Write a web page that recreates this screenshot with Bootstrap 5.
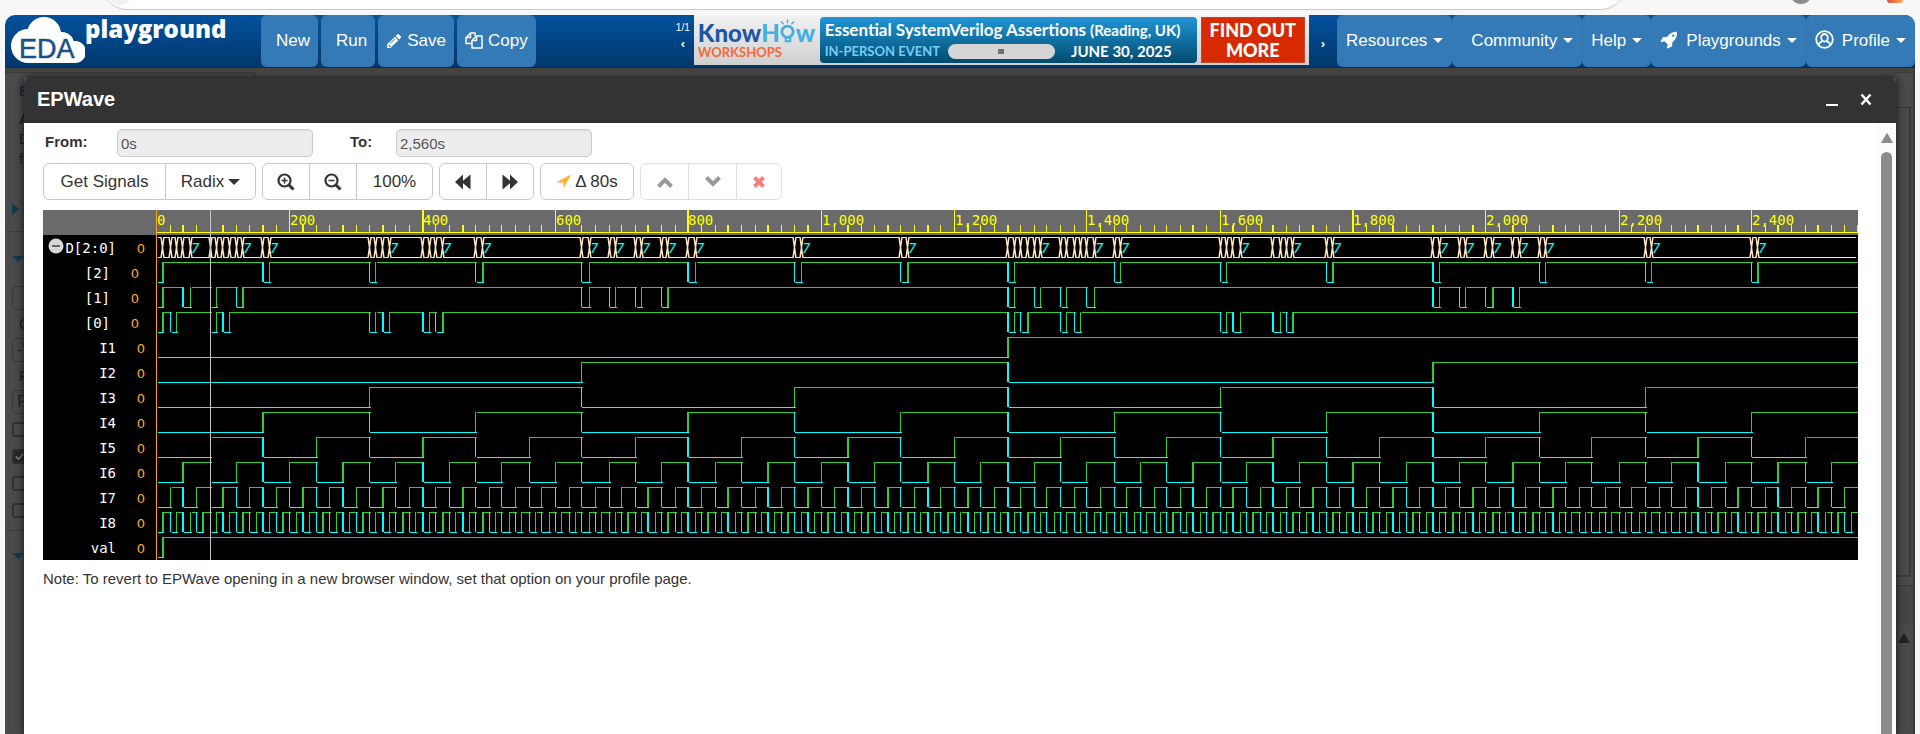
<!DOCTYPE html>
<html lang="en">
<head>
<meta charset="utf-8">
<meta name="viewport" content="width=device-width, initial-scale=1">
<title>EDA Playground - EPWave</title>
<link href="https://cdn.jsdelivr.net/npm/bootstrap@5.3.0/dist/css/bootstrap.min.css" rel="stylesheet">
<style>
  body { font-family: "Liberation Sans", Arial, sans-serif; font-size: 15px; line-height: 20px; color: #333; background: #f7f7f7; }
  button, input { font-family: inherit; }

  /* browser edge */
  .chrome-edge { height: 15px; }
  .address-bar { position: absolute; left: 102px; right: 294px; bottom: 5px; height: 50px; background: #fff; border: 1px solid #c8c8c8; border-radius: 25px; }
  .chrome-dot { position: absolute; border-radius: 50%; }

  /* site header */
  .site-bar { height: 53px; margin: 0 5px; border-radius: 10px 10px 0 0; background: linear-gradient(#03519d, #02386c); border-bottom: 1px solid #022c55; overflow: hidden; }
  .brand-box { width: 256px; text-decoration: none; }
  .brand-word { font: 800 24px/28px "Open Sans", sans-serif; color: #fff; }
  .site-btn { height: 52px; border: 0; border-radius: 6px; background: #337ab7; color: #fff; font-size: 17px; line-height: 40px; padding: 0 8px; white-space: nowrap; box-shadow: inset 0 0 1px #2e6da4; }
  .site-btn svg { vertical-align: -3px; margin-right: 5px; }
  .site-left { gap: 3px; }
  .lead-space { padding-left: 15px; }
  .menu-btn { padding: 0 9px; }
  .menu-btn::after, .radix-btn::after { content: ""; display: inline-block; margin-left: 6px; vertical-align: 3px; border: 5px solid transparent; border-top-color: currentColor; border-bottom: 0; }
  .menu-btn svg { margin-right: 8px; }
  .menu-wide { padding-left: 19px; }

  /* banner */
  .slide-btn { border: 0; background: none; color: #fff; padding: 0; font: bold 13px/14px "Liberation Sans", sans-serif; }
  .slide-count { font-size: 10px; line-height: 10px; color: #fff; }
  .ad { height: 50px; width: 615px; padding: 2px 4px 2px 4px; background: linear-gradient(#f2f2f2, #cfcfcf); text-decoration: none; font-family: Lato, sans-serif; color: #fff; white-space: nowrap; }
  .ad:hover { color: #fff; }
  .ad-brand { width: 122px; }
  .ad-name { font: 900 24px/26px Lato, sans-serif; color: #1c57a5; padding-top: 3px; }
  .ad-name span { color: #40b1e2; }
  .ad-sub { font: 700 13px/13px Lato, sans-serif; color: #f2693c; }
  .ad-panel { width: 377px; height: 46px; padding: 1px 5px; border-radius: 4px; background: linear-gradient(#2196d8, #014b6d); }
  .ad-title { font: 700 17px/24px Lato, sans-serif; }
  .ad-title small { font-size: 15px; }
  .ad-row { font-size: 15px; line-height: 18px; font-weight: 700; }
  .ad-kind { color: #74cdf5; font-size: 13px; }
  .ad-pill { width: 107px; height: 15px; border-radius: 8px; background: #d5d5d5; }
  .ad-pill i { width: 6px; height: 5px; background: #707070; }
  .ad-go { width: 104px; height: 46px; background: #d82a00; border: 1px solid #b94a30; font: 900 18px/20px Lato, sans-serif; padding-top: 2px; }

  /* dimmed page under the dialog */
  .stage { margin: 0 5px; background: #4a4a4a; border-top: 4px solid #434343; border-right: 2px solid #383838; }
  .side { width: 250px; height: 100%; border: 1px solid #3a3a3a; border-left: 0; border-bottom: 0; padding: 8px 0 0 7px; color: #0f1d33; }
  .side-line { height: 20px; padding-left: 7px; }
  .side-rule { border-top: 1px solid #3a3a3a; margin-left: -6px; }
  .side-input { width: 200px; height: 24px; background: transparent; border: 1px solid #383838; border-radius: 5px; color: #222; padding: 0 4px; font-size: 17px; display: block; }
  .side-check { appearance: none; display: block; width: 15px; height: 15px; border: 2px solid #303030; border-radius: 3px; margin: 0 0 12px; }
  .side-check:checked { background: #262626 url("data:image/svg+xml,%3Csvg xmlns='http://www.w3.org/2000/svg' viewBox='0 0 12 12'%3E%3Cpath d='M2 6l3 3 5-6' fill='none' stroke='%23777' stroke-width='2'/%3E%3C/svg%3E"); }
  .side-gap { height: 10px; }
  .edge-right { width: 20px; height: 100%; }
  .edge-a { height: 36px; border-top: 1px solid #3a3a3a; border-bottom: 1px solid #383838; }
  .edge-b { height: 469px; border-right: 2px solid #383838; border-bottom: 2px solid #383838; margin-right: 2px; }
  .edge-c { margin-top: 8px; height: 40px; border-top: 1px solid #383838; background: #454545; }

  /* dialog */
  .wave-dialog { position: absolute; top: 6px; bottom: 0; left: 19px; right: 17px; background: #fff; box-shadow: 0 0 8px #111; border-radius: 4px 4px 0 0; }
  .wave-head { height: 45px; background: #333; border-radius: 4px 4px 0 0; padding: 0 24px 3px 13px; color: #fff; }
  .wave-head h1 { font-size: 20px; line-height: 24px; font-weight: bold; margin: 0; }
  .head-btn { border: 0; background: none; padding: 0; width: 12px; height: 14px; display: block; }
  .head-tools { gap: 22px; }
  .wave-main { padding: 6px 19px 0; }
  .range-row { height: 28px; padding-left: 2px; margin-bottom: 6px; }
  .range-row label { font-weight: bold; margin-top: -2px; }
  .label-from { width: 72px; }
  .label-to { width: 46px; margin-left: 37px; }
  .range-input { width: 196px; height: 28px; border: 1px solid #ccc; border-radius: 5px; background: #ededed; color: #555; padding: 0 3px; font-size: 15px; box-shadow: inset 0 1px 1px #ddd; }
  .tool-row { gap: 6px; }
  .tool { height: 37px; border: 1px solid #c8c8c8; background: #fff; color: #333; font-size: 17px; line-height: 20px; padding: 0; margin-left: -1px; display: flex; align-items: center; justify-content: center; white-space: nowrap; }
  .tool:first-child { margin-left: 0; border-radius: 6px 0 0 6px; }
  .tool:last-child { border-radius: 0 6px 6px 0; }
  .tool:only-child { border-radius: 6px; }
  .tool:disabled { border-color: #dfdfdf; }
  .w-icon { width: 48px; }
  .w-move { width: 49px; }
  .w-remove { width: 46px; }
  .w-signals { width: 123px; }
  .w-radix { width: 91px; }
  .w-zoom { width: 77px; }
  .w-delta { width: 94px; }
  .radix-btn::after { border-width: 6px; border-bottom: 0; margin-left: 4px; vertical-align: 2px; }

  .wave-box { margin-top: 10px; background: #000; }
  .names { width: 113px; color: #fff; font: 14px/25px "DejaVu Sans Mono", monospace; }
  .names-top { height: 25px; background: #6a6a6a; }
  .name-row { height: 25px; padding: 2px 11px 0 0; }
  .name-row.bit { padding-right: 17px; }
  .name-row b { font: 13px/25px "DejaVu Sans", sans-serif; color: #ffa82e; width: 29px; text-align: right; }
  .fold { border: 0; background: none; padding: 0; display: block; height: 16px; margin: -5px 1px 0 0; }
  .wave-svg { display: block; width: 100%; height: 350px; font: 14px "DejaVu Sans Mono", monospace; }
  .wave-note { margin: 9px 0 0; }

  .scroll-track { width: 19px; background: #fcfcfc; padding-top: 10px; }
  .scroll-thumb { width: 11px; border-radius: 6px 6px 0 0; background: #8b8b8b; margin-top: 9px; }
</style>
</head>
<body class="vh-100 overflow-hidden d-flex flex-column">

<div class="chrome-edge position-relative overflow-hidden flex-shrink-0">
  <div class="address-bar"></div>
  <span class="chrome-dot" style="left:108px;top:-19px;width:24px;height:24px;background:#f1f1f1"></span>
  <span class="chrome-dot" style="right:108px;top:-18px;width:22px;height:22px;background:#8f8b88"></span>
  <span class="chrome-dot" style="right:17px;top:-5px;width:16px;height:8px;border-radius:3px;background:linear-gradient(90deg,#e8483c,#ffad55)"></span>
</div>

<header class="site-bar d-flex align-items-start flex-shrink-0">
  <a class="brand-box d-flex flex-shrink-0" href="#" aria-label="EDA playground">
    <svg width="80" height="52" viewBox="0 0 80 52">
      <g fill="#fff"><circle cx="23" cy="31" r="17"/><circle cx="39" cy="19" r="17"/><circle cx="57" cy="29" r="12"/><circle cx="70" cy="37" r="11"/><rect x="22" y="26" width="49" height="22"/></g>
      <text x="14" y="43" font-family="Liberation Sans, sans-serif" font-size="27" fill="#1b4f86" stroke="#1b4f86" stroke-width=".5">EDA</text>
    </svg>
    <span class="brand-word">playground</span>
  </a>
  <nav class="site-left d-flex flex-shrink-0" aria-label="Editor">
    <button class="site-btn lead-space" type="button">New</button>
    <button class="site-btn lead-space" type="button">Run</button>
    <button class="site-btn" type="button"><svg width="16" height="16" viewBox="0 0 16 16" fill="#fff"><path d="M11.2 1.4c.5-.5 1.1-.5 1.6 0l1.9 1.9c.5.5.5 1.1 0 1.6L13.200 6.400 9.700 2.900z"/><path fill-rule="evenodd" d="M8.900 3.700l3.500 3.500L4.500 15.100H1v-3.500zM2.300 12.400v.9h1v1h.8l.7-.7-1.800-1.800zM8.700 5.400L4.100 10l.5.5 4.600-4.600z"/></svg>Save</button>
    <button class="site-btn" type="button"><svg width="18" height="18" viewBox="0 0 18 18" fill="none" stroke="#fff" stroke-width="1.500" stroke-linejoin="round"><path d="M6.500 12.500H1V6.500L5.500 2H10v3M5.500 2v4.500H1"/><path d="M7 9.500L11.500 5H17v12H7zM11.500 5v4.500H7"/></svg>Copy</button>
  </nav>

  <div class="d-flex ms-auto flex-shrink-0">
    <div class="me-1 pt-1 text-center">
      <div class="slide-count mb-1 mt-1">1/1</div>
      <button class="slide-btn d-block mx-auto" type="button" aria-label="Previous">‹</button>
    </div>
    <a class="ad d-flex" href="#">
      <div class="ad-brand flex-shrink-0">
        <div class="ad-name d-flex">Know<span>H</span>
          <svg width="16" height="30" viewBox="0 0 17 30" class="flex-shrink-0" fill="none" stroke="#40b1e2" stroke-width="3" style="margin-top:-6px"><circle cx="8" cy="18" r="6"/><path d="M6 24v4h5v-4" stroke-width="2"/><path d="M8 5v4M1 7l3 3M15 7l-3 3" stroke-width="1.500"/></svg><span>w</span></div>
        <div class="ad-sub">WORKSHOPS</div>
      </div>
      <div class="ad-panel flex-shrink-0">
        <div class="ad-title">Essential SystemVerilog Assertions <small>(Reading, UK)</small></div>
        <div class="ad-row d-flex align-items-center">
          <span class="ad-kind">IN-PERSON EVENT</span>
          <span class="ad-pill d-flex align-items-center justify-content-center ms-2 me-3"><i></i></span>
          <span>JUNE 30, 2025</span>
        </div>
      </div>
      <div class="ad-go flex-shrink-0 text-center ms-1">FIND OUT<br>MORE</div>
    </a>
    <button class="slide-btn px-2 mx-1 mt-2" type="button" aria-label="Next">›</button>
  </div>
  <nav class="d-flex flex-shrink-0" aria-label="Site">
    <button class="site-btn menu-btn" type="button">Resources</button>
    <button class="site-btn menu-btn menu-wide" type="button">Community</button>
    <button class="site-btn menu-btn" type="button">Help</button>
    <button class="site-btn menu-btn" type="button"><svg width="18" height="18" viewBox="0 0 18 18" fill="#fff"><path fill-rule="evenodd" d="M17 .8c.3 4.600-1.200 7.800-4.600 10.500l-.3 4-4.400 2.300-.9-.7 1-3.300-3.300-3.300-3.300.9-.6-.8L2.900 6.300l4-.3C9.500 2.500 12.600.8 17 .8zM13.300 5.800a1.200 1.200 0 1 0 0-2.400 1.200 1.200 0 0 0 0 2.400z"/></svg>Playgrounds</button>
    <button class="site-btn menu-btn" type="button"><svg width="19" height="19" viewBox="0 0 19 19" fill="none" stroke="#fff" stroke-width="1.800"><circle cx="9.500" cy="9.500" r="8.300"/><ellipse cx="9.500" cy="7.800" rx="3.300" ry="3.800"/><path d="M3.500 15c.8-2.600 2-3.500 3.900-3.700M15.500 15c-.8-2.600-2-3.500-3.900-3.700"/></svg>Profile</button>
  </nav>
</header>

<main class="stage position-relative flex-grow-1 overflow-hidden">
  <div class="d-flex h-100 justify-content-between" aria-hidden="true">
    <div class="side">
      <div class="side-line mb-2">E</div>
      <div class="side-line fw-bold">A</div>
      <div class="side-line">D</div>
      <div class="side-line mb-4">fr</div>
      <div class="side-gap"></div>
      <svg class="d-block mb-3" width="8" height="12"><path d="M0 0l7 6-7 6z" fill="#0f3a50"/></svg>
      <div class="side-rule"></div>
      <svg class="d-block mt-4 mb-4" width="12" height="6"><path d="M0 0h12l-6 6z" fill="#0f3a50"/></svg>
      <input class="side-input" tabindex="-1" aria-label="Library" value="  L">
      <div class="side-line my-1">C</div>
      <input class="side-input" tabindex="-1" aria-label="Compile options" value="-W">
      <div class="side-line my-1">R</div>
      <input class="side-input mb-2" tabindex="-1" aria-label="Run options" value="R">
      <input type="checkbox" class="side-check" tabindex="-1" aria-label="Use run script">
      <input type="checkbox" class="side-check" tabindex="-1" aria-label="Open EPWave after run" checked>
      <input type="checkbox" class="side-check" tabindex="-1" aria-label="Show output file">
      <input type="checkbox" class="side-check" tabindex="-1" aria-label="Download files">
      <div class="side-rule mb-3"></div>
      <svg class="d-block" width="12" height="12"><path d="M0 6h12l-6 6z" fill="#0f3a50"/></svg>
    </div>
    <div class="edge-right">
      <div class="edge-a"></div>
      <div class="edge-b"></div>
      <div class="edge-c"></div>
      <svg class="d-block ms-1 mt-2" width="13" height="10"><path d="M1 10h12L7 0z" fill="#222"/></svg>
    </div>
  </div>

  <section class="wave-dialog d-flex flex-column" role="dialog" aria-labelledby="dlg-title">
    <div class="wave-head d-flex align-items-center flex-shrink-0">
      <h1 id="dlg-title" class="me-auto">EPWave</h1>
      <div class="head-tools d-flex">
        <button class="head-btn" type="button" aria-label="Minimize"><svg class="d-block" width="12" height="14"><path d="M0 12h12v3H0z" fill="#fff"/></svg></button>
        <button class="head-btn" type="button" aria-label="Close"><svg class="d-block" width="12" height="14"><path d="M1.500 2.500l9 10M10.500 2.500l-9 10" stroke="#fff" stroke-width="2.500"/></svg></button>
      </div>
    </div>
    <div class="d-flex flex-grow-1 overflow-hidden">
      <div class="wave-main flex-grow-1">
        <form class="range-row d-flex align-items-center">
          <label class="label-from" for="t-from">From:</label>
          <input class="range-input" id="t-from" value="0s" readonly>
          <label class="label-to" for="t-to">To:</label>
          <input class="range-input" id="t-to" value="2,560s" readonly>
        </form>
        <div class="tool-row d-flex">
          <div class="d-flex">
            <button class="tool w-signals" type="button">Get Signals</button>
            <button class="tool w-radix radix-btn" type="button">Radix</button>
          </div>
          <div class="d-flex">
            <button class="tool w-icon" type="button" aria-label="Zoom in"><svg width="18" height="18" viewBox="0 0 18 18" fill="none" stroke="#333"><circle cx="7.500" cy="7.500" r="6" stroke-width="2.200"/><path d="M12 12l4.500 4.500" stroke-width="3"/><path d="M7.500 4.500v6M4.500 7.500h6" stroke-width="1.500"/></svg></button>
            <button class="tool w-icon" type="button" aria-label="Zoom out"><svg width="18" height="18" viewBox="0 0 18 18" fill="none" stroke="#333"><circle cx="7.500" cy="7.500" r="6" stroke-width="2.200"/><path d="M12 12l4.500 4.500" stroke-width="3"/><path d="M4.500 7.500h6" stroke-width="1.500"/></svg></button>
            <button class="tool w-zoom" type="button">100%</button>
          </div>
          <div class="d-flex">
            <button class="tool w-icon" type="button" aria-label="Previous edge"><svg width="16" height="16" viewBox="0 0 16 16" fill="#333"><path d="M8 .5v6.200L15.500.5v15L8 9.300v6.200L0 8z"/></svg></button>
            <button class="tool w-icon" type="button" aria-label="Next edge"><svg width="16" height="16" viewBox="0 0 16 16" fill="#333"><path d="M8 .5v6.200L.5.500v15L8 9.300v6.200L16 8z"/></svg></button>
          </div>
          <div class="d-flex">
            <button class="tool w-delta" type="button"><svg class="me-1" width="15" height="15" viewBox="0 0 15 15" fill="#ffb02e"><path d="M0 8.500L15 .5 7.500 14.500V8.500z"/></svg>Δ 80s</button>
          </div>
          <div class="d-flex">
            <button class="tool w-move" type="button" disabled aria-label="Move up"><svg width="16" height="12" fill="none" stroke="#999" stroke-width="4"><path d="M1.500 10.500L8 4l6.500 6.500"/></svg></button>
            <button class="tool w-move" type="button" disabled aria-label="Move down"><svg width="16" height="12" fill="none" stroke="#999" stroke-width="4"><path d="M1.500 1.500L8 8l6.500-6.500"/></svg></button>
            <button class="tool w-remove" type="button" disabled aria-label="Remove"><svg width="12" height="12" stroke="#ff7c7c" stroke-width="4"><path d="M1.500 1.500l9 9M10.500 1.500l-9 9"/></svg></button>
          </div>
        </div>

        <div class="wave-box d-flex">
          <div class="names flex-shrink-0" id="names"><div class="names-top"></div></div>
          <div class="flex-grow-1 overflow-hidden"><svg class="wave-svg" id="wave" role="img" aria-label="Waveforms"></svg></div>
        </div>
        <p class="wave-note">Note: To revert to EPWave opening in a new browser window, set that option on your profile page.</p>
      </div>
      <div class="scroll-track d-flex flex-column align-items-center flex-shrink-0" aria-hidden="true">
        <svg class="flex-shrink-0" width="14" height="10"><path d="M1.500 10L7 .5 12.500 10z" fill="#8b8b8b" stroke="#8b8b8b" stroke-linejoin="round"/></svg>
        <div class="scroll-thumb flex-grow-1"></div>
      </div>
    </div>
  </section>
</main>

<script src="https://cdn.jsdelivr.net/npm/bootstrap@5.3.0/dist/js/bootstrap.bundle.min.js"></script>
<script>
  const STEPS = 256, STEP = 10, END = STEPS * STEP, ROW = 25, CELL = 1.25;
  const HIGH = '#32cd32', LOW = '#00ffff', BUS = '#ffe4c4';

  // Encoder output: inputs I1..I8 are the bits of n, most significant first.
  const bit = (n, i) => (n >> (8 - i)) & 1;
  const code = n => { let d = 0; for (let i = 1; i <= 8; i++) if (bit(n, i)) d |= i - 1; return d; };

  const signals = [{ name: 'D[2:0]', bus: code }];
  [2, 1, 0].forEach(b => signals.push({ name: '[' + b + ']', sub: true, wave: n => (code(n) >> b) & 1 }));
  for (let i = 1; i <= 8; i++) signals.push({ name: 'I' + i, wave: n => bit(n, i) });
  signals.push({ name: 'val', wave: n => n ? 1 : 0 });

  const fold = '<button class="fold" type="button" aria-label="Collapse D[2:0]"><svg class="d-block" width="16" height="16"><circle cx="8" cy="8" r="7.500" fill="#d8d8d8"/><path d="M4 8h8" stroke="#444" stroke-width="1.500"/></svg></button>';
  document.getElementById('names').insertAdjacentHTML('beforeend', signals.map(s =>
    '<div class="name-row d-flex justify-content-end align-items-center' + (s.sub ? ' bit' : '') + '">' +
    (s.bus ? fold : '') + '<span>' + s.name + '</span><b>0</b></div>').join(''));

  const svg = document.getElementById('wave');
  const rect = (x, y, w, h, c) => '<rect x="' + x + '" y="' + y + '" width="' + w + '" height="' + h + '" fill="' + c + '"/>';

  function draw() {
    const W = Math.floor(svg.getBoundingClientRect().width);
    const k = (W / CELL - 0.5) / END;
    // left pixel of a time, its line width, and where the level lines meet it
    const col = t => {
      const c = Math.round(t * k), l = Math.round(CELL * c + 1e-6), r = Math.round(CELL * (c + 1));
      return { x: l, w: Math.max(1, r - l), from: l + (c % 2 ? 2 : 1), to: l + 2 };
    };
    let out = rect(0, 0, W, 25, '#6a6a6a') + rect(1, 22, W, 1, '#ff0');
    for (let t = 20; t <= END; t += 20) {
      const p = col(t), major = t % 200 === 0;
      out += rect(p.x, major ? 0 : 15, p.w, major ? 22 : 7, '#ff0');
    }
    for (let t = 0; t < END; t += 200)
      out += '<text x="' + (col(t).x + 1) + '" y="15" fill="#ff0">' + t.toLocaleString('en-US') + '</text>';

    signals.forEach((s, i) => {
      const y = ROW * (i + 1), f = s.bus || s.wave;
      let start = 0;
      for (let n = 1; n <= STEPS; n++) {
        if (n < STEPS && f(n) === f(start)) continue;
        const a = col(start * STEP), b = col(n * STEP);
        if (s.bus) {
          out += rect(a.x + 2, y + 2, b.x - a.x - 3, 1, BUS) + rect(a.x + 2, y + 22, b.x - a.x - 3, 1, BUS);
          if (n < STEPS)
            out += '<path stroke="' + BUS + '" stroke-width="1.500" d="M' + (b.x - 1) + ' ' + (y + 2) + 'l3 21m0 -21l-3 21"/>';
          if (n - start > 2)
            out += '<text x="' + (a.x + 1) + '" y="' + (y + 18) + '" fill="' + LOW + '" font-style="italic">' + f(start) + '</text>';
        } else {
          const hi = f(start), x0 = start ? a.from : 2;
          out += rect(x0, y + (hi ? 2 : 22), (n < STEPS ? b.to : W) - x0, 1, hi ? HIGH : LOW);
          if (n < STEPS) out += rect(b.x, y + 2, b.w, 20, hi ? LOW : HIGH);
        }
        start = n;
      }
    });
    out += rect(0, 0, 1, 350, '#f5a12c') + rect(col(80).x, 0, 1, 350, '#c8c8c8');
    svg.innerHTML = out;
  }
  draw();
  window.addEventListener('resize', draw);
</script>
</body>
</html>
